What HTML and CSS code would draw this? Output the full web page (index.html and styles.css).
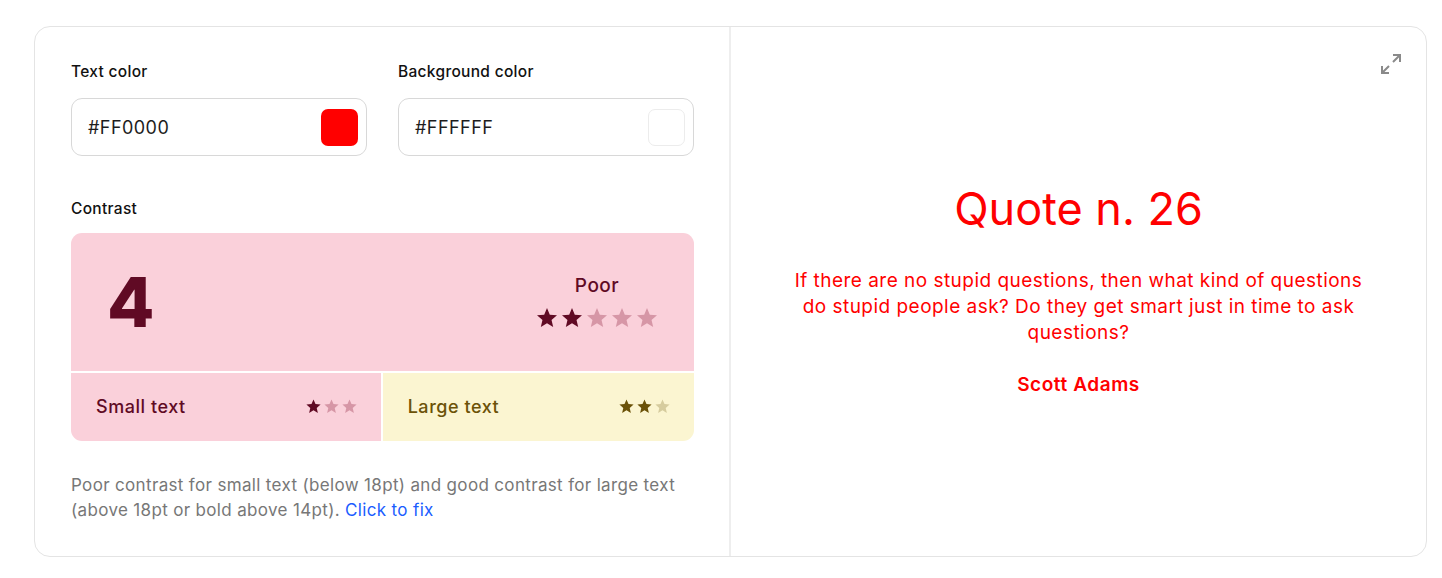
FILE: index.html
```html
<!DOCTYPE html>
<html lang="en">
<head>
<meta charset="utf-8">
<title>Contrast checker</title>
<link rel="stylesheet" href="styles.css">
</head>
<body>
<div class="card">
  <section class="controls">
    <div class="fields">
      <div class="field">
        <label class="label">Text color</label>
        <div class="input">
          <span class="value">#FF0000</span>
          <span class="swatch swatch-red"></span>
        </div>
      </div>
      <div class="field">
        <label class="label">Background color</label>
        <div class="input">
          <span class="value">#FFFFFF</span>
          <span class="swatch swatch-white"></span>
        </div>
      </div>
    </div>

    <div class="label contrast-label">Contrast</div>
    <div class="contrast">
      <div class="score">
        <div class="ratio">4</div>
        <div class="rating">
          <div class="rating-text">Poor</div>
          <div class="stars stars-lg">
            <svg class="on" viewBox="0 0 24 24"><path d="M12 17.27L18.18 21l-1.64-7.03L22 9.24l-7.19-.61L12 2 9.19 8.63 2 9.24l5.46 4.73L5.82 21z"/></svg>
            <svg class="on" viewBox="0 0 24 24"><path d="M12 17.27L18.18 21l-1.64-7.03L22 9.24l-7.19-.61L12 2 9.19 8.63 2 9.24l5.46 4.73L5.82 21z"/></svg>
            <svg class="off" viewBox="0 0 24 24"><path d="M12 17.27L18.18 21l-1.64-7.03L22 9.24l-7.19-.61L12 2 9.19 8.63 2 9.24l5.46 4.73L5.82 21z"/></svg>
            <svg class="off" viewBox="0 0 24 24"><path d="M12 17.27L18.18 21l-1.64-7.03L22 9.24l-7.19-.61L12 2 9.19 8.63 2 9.24l5.46 4.73L5.82 21z"/></svg>
            <svg class="off" viewBox="0 0 24 24"><path d="M12 17.27L18.18 21l-1.64-7.03L22 9.24l-7.19-.61L12 2 9.19 8.63 2 9.24l5.46 4.73L5.82 21z"/></svg>
          </div>
        </div>
      </div>
      <div class="sizes">
        <div class="size size-poor">
          <span>Small text</span>
          <div class="stars stars-sm">
            <svg class="on" viewBox="0 0 24 24"><path d="M12 17.27L18.18 21l-1.64-7.03L22 9.24l-7.19-.61L12 2 9.19 8.63 2 9.24l5.46 4.73L5.82 21z"/></svg>
            <svg class="off" viewBox="0 0 24 24"><path d="M12 17.27L18.18 21l-1.64-7.03L22 9.24l-7.19-.61L12 2 9.19 8.63 2 9.24l5.46 4.73L5.82 21z"/></svg>
            <svg class="off" viewBox="0 0 24 24"><path d="M12 17.27L18.18 21l-1.64-7.03L22 9.24l-7.19-.61L12 2 9.19 8.63 2 9.24l5.46 4.73L5.82 21z"/></svg>
          </div>
        </div>
        <div class="size size-good">
          <span>Large text</span>
          <div class="stars stars-sm">
            <svg class="on" viewBox="0 0 24 24"><path d="M12 17.27L18.18 21l-1.64-7.03L22 9.24l-7.19-.61L12 2 9.19 8.63 2 9.24l5.46 4.73L5.82 21z"/></svg>
            <svg class="on" viewBox="0 0 24 24"><path d="M12 17.27L18.18 21l-1.64-7.03L22 9.24l-7.19-.61L12 2 9.19 8.63 2 9.24l5.46 4.73L5.82 21z"/></svg>
            <svg class="off" viewBox="0 0 24 24"><path d="M12 17.27L18.18 21l-1.64-7.03L22 9.24l-7.19-.61L12 2 9.19 8.63 2 9.24l5.46 4.73L5.82 21z"/></svg>
          </div>
        </div>
      </div>
    </div>

    <p class="note">Poor contrast for small text (below 18pt) and good contrast for large text (above 18pt or bold above 14pt). <a class="fix" href="#">Click to fix</a></p>
  </section>

  <section class="preview">
    <button class="expand" aria-label="Fullscreen">
      <svg viewBox="0 0 24 24"><path d="M14 3h7v7M21 3l-7 7M10 21H3v-7M3 21l7-7"/></svg>
    </button>
    <h1 class="quote-title">Quote n. 26</h1>
    <p class="quote-text">If there are no stupid questions, then what kind of questions do stupid people ask? Do they get smart just in time to ask questions?</p>
    <p class="quote-author">Scott Adams</p>
  </section>
</div>
</body>
</html>
```

FILE: styles.css
```css
* { box-sizing: border-box; }

html, body {
  margin: 0;
  padding: 0;
  background: #ffffff;
  font-family: Inter, "Noto Sans", "Liberation Sans", sans-serif;
  color: #111;
}

body {
  padding: 26px 15px 0 34px;
}

.card {
  width: 1393px;
  height: 531px;
  border: 1px solid #e4e4e4;
  border-radius: 16px;
  display: flex;
  overflow: hidden;
}

.controls {
  width: 696px;
  flex: none;
  border-right: 2px solid #eeeeee;
  padding: 35px 35px 0 36px;
}

.fields {
  display: flex;
  gap: 31px;
}

.field {
  flex: 1;
  display: flex;
  flex-direction: column;
  gap: 16px;
}

.label {
  font-size: 15.5px;
  font-weight: 500;
  line-height: 20px;
  letter-spacing: 0.02em;
  color: #111;
}

.input {
  height: 58px;
  border: 1px solid #d8d8d8;
  border-radius: 11px;
  display: flex;
  align-items: center;
  justify-content: space-between;
  padding: 0 8px 0 16px;
}

.value {
  font-size: 18px;
  letter-spacing: 0.025em;
  color: #1d1d1d;
}

.swatch {
  width: 37px;
  height: 37px;
  border-radius: 7px;
}

.swatch-red { background: #ff0000; }
.swatch-white { background: #ffffff; border: 1px solid #ececec; }

.contrast-label {
  margin-top: 43px;
}

.contrast {
  margin-top: 14px;
  border-radius: 11px;
  overflow: hidden;
  display: flex;
  flex-direction: column;
  gap: 2px;
}

.score {
  height: 138px;
  background: #fad0da;
  display: flex;
  align-items: center;
  justify-content: space-between;
  padding: 0 35px 0 36px;
  color: #600a24;
}

.ratio {
  font-size: 69px;
  font-weight: 800;
  line-height: 1;
}

.rating {
  display: flex;
  flex-direction: column;
  align-items: center;
  gap: 8px;
}

.rating-text {
  font-size: 19px;
  font-weight: 500;
  line-height: 24px;
  letter-spacing: 0.025em;
}

.stars {
  display: flex;
  gap: 1px;
}

.stars-lg svg { width: 24px; height: 24px; }
.stars-sm svg { width: 17px; height: 17px; }

.size-poor .on, .score .on { fill: #600a24; }
.size-poor .off, .score .off { fill: #d696a6; }
.size-good .on { fill: #6b5208; }
.size-good .off { fill: #d6cc9e; }

.sizes {
  display: flex;
  gap: 2px;
  height: 68px;
}

.size {
  display: flex;
  align-items: center;
  justify-content: space-between;
  padding: 0 23px 1px 25px;
  font-size: 18px;
  font-weight: 500;
  letter-spacing: 0.03em;
}

.size-poor { flex: 309 1 0; background: #fad0da; color: #600a24; }
.size-good { flex: 311 1 0; background: #fbf5d1; color: #6b5208; }

.note {
  margin: 32px 0 0;
  font-size: 17px;
  line-height: 25px;
  letter-spacing: 0.02em;
  color: #777777;
}

.fix {
  color: #1b5dff;
  text-decoration: none;
}

.preview {
  flex: 1;
  position: relative;
  display: flex;
  flex-direction: column;
  align-items: center;
  justify-content: center;
  padding: 0 56px 6px;
  text-align: center;
  color: #ff0000;
}

.expand {
  position: absolute;
  top: 25px;
  right: 23px;
  width: 24px;
  height: 24px;
  padding: 0;
  border: 0;
  background: none;
}

.expand svg {
  width: 24px;
  height: 24px;
  fill: none;
  stroke: #8a8a8a;
  stroke-width: 2;
}

.quote-title {
  margin: 0;
  font-size: 45px;
  font-weight: 400;
  line-height: 58px;
}

.quote-text {
  margin: 30px 0 0;
  font-size: 19px;
  line-height: 26px;
  letter-spacing: 0.025em;
}

.quote-author {
  margin: 26px 0 0;
  font-size: 19px;
  font-weight: 600;
  line-height: 26px;
  letter-spacing: 0.03em;
}
```
